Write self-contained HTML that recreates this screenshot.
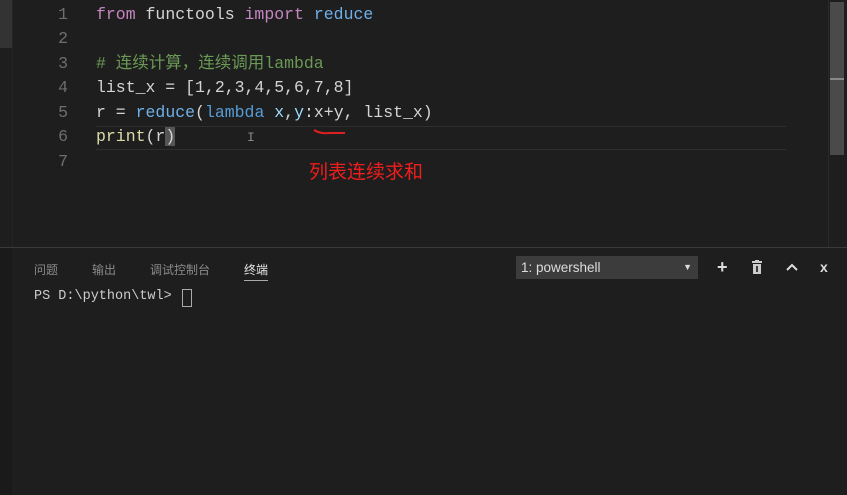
<!DOCTYPE html>
<html><head><meta charset="utf-8"><style>
body{margin:0;width:847px;height:495px;background:#1e1e1e;overflow:hidden;position:relative;font-family:"Liberation Mono","Noto Sans CJK SC",monospace}
.a{position:absolute}
.ln{position:absolute;left:40px;width:28px;text-align:right;color:#6e6e6e;font-size:16.5px;line-height:20px}
.code{position:absolute;left:96px;font-size:16.5px;line-height:20px;color:#d4d4d4;white-space:pre}
.k{color:#c586c0}.f{color:#6fb0e8}.c{color:#6a9955}.y{color:#dcdcaa}.b{color:#569cd6}.v{color:#9cdcfe}
.tab{position:absolute;top:261px;font-family:"Liberation Sans","Noto Sans CJK SC",sans-serif;font-size:12px;color:#8a8a8a}
</style></head><body>
<div class="a" style="left:0;top:0;width:12px;height:48px;background:#333"></div>
<div class="a" style="left:12px;top:0;width:1px;height:248px;background:#252525"></div>
<div class="a" style="left:830px;top:2px;width:14px;height:153px;background:#4a4a4a"></div>
<div class="a" style="left:830px;top:78px;width:14px;height:2px;background:#888"></div>
<div class="a" style="left:828px;top:0;width:1px;height:248px;background:#2a2a2a"></div>
<div class="a" style="left:96px;top:126px;width:690px;height:1px;background:#2e2e2e"></div>
<div class="a" style="left:96px;top:149px;width:690px;height:1px;background:#2e2e2e"></div>
<div class="ln" style="top:5px">1</div><div class="ln" style="top:29px">2</div><div class="ln" style="top:54px">3</div><div class="ln" style="top:78px">4</div><div class="ln" style="top:103px">5</div><div class="ln" style="top:127px">6</div><div class="ln" style="top:152px">7</div>
<div class="code" style="top:5px"><span class="k">from</span> functools <span class="k">import</span> <span class="f">reduce</span></div>
<div class="code c" style="top:54px"># 连续计算，连续调用lambda</div>
<div class="code" style="top:78px">list_x = [1,2,3,4,5,6,7,8]</div>
<div class="code" style="top:103px">r = <span class="f">reduce</span>(<span class="b">lambda</span> <span class="v">x</span>,<span class="v">y</span>:x+y, list_x)</div>
<div class="code" style="top:127px"><span class="y">print</span>(r<span style="background:#555">)</span></div>
<div class="a" style="left:247px;top:130px;color:#888;font-size:13px">I</div>
<svg class="a" style="left:312px;top:127px" width="36" height="10"><path d="M2 3 Q8 7 18 6 L33 6" stroke="#e02020" stroke-width="2" fill="none"/></svg>
<div class="a" style="left:309px;top:157px;color:#f01d1d;font-family:'Noto Sans CJK SC',sans-serif;font-size:19px">列表连续求和</div>
<div class="a" style="left:0;top:247px;width:847px;height:1px;background:#3a3a3a"></div>
<div class="a" style="left:0;top:248px;width:847px;height:247px;background:#1e1e1e"></div>
<div class="a" style="left:0;top:248px;width:12px;height:247px;background:#1a1a1a"></div>
<div class="tab" style="left:34px">问题</div>
<div class="tab" style="left:92px">输出</div>
<div class="tab" style="left:150px">调试控制台</div>
<div class="tab" style="left:244px;color:#e7e7e7">终端</div>
<div class="a" style="left:244px;top:280px;width:24px;height:1px;background:#aaa"></div>
<div class="a" style="left:516px;top:256px;width:182px;height:23px;background:#3c3c3c;color:#ddd;font-family:'Liberation Sans',sans-serif;font-size:13.5px;line-height:23px;text-indent:5px">1: powershell<span style="position:absolute;right:6px;font-size:9px">▼</span></div>
<div class="a" style="left:717px;top:257px;color:#ddd;font:bold 18px 'Liberation Sans',sans-serif">+</div>
<svg class="a" style="left:751px;top:260px" width="12" height="14"><rect x="1" y="1" width="10" height="2" fill="#ccc"/><rect x="4" y="0" width="4" height="2" fill="#ccc"/><rect x="2" y="4" width="8" height="10" fill="#ccc"/><rect x="5" y="6" width="2" height="6" fill="#3c3c3c"/></svg>
<svg class="a" style="left:785px;top:262px" width="14" height="10"><path d="M2 8 L7 3 L12 8" stroke="#ddd" stroke-width="2" fill="none"/></svg>
<div class="a" style="left:820px;top:259px;color:#ddd;font:bold 14px 'Liberation Sans',sans-serif">x</div>
<div class="a" style="left:34px;top:289px;color:#cccccc;font-size:13.5px">PS D:\python\twl&gt;</div>
<div class="a" style="left:182px;top:289px;width:8px;height:16px;border:1px solid #aaa"></div>
</body></html>
